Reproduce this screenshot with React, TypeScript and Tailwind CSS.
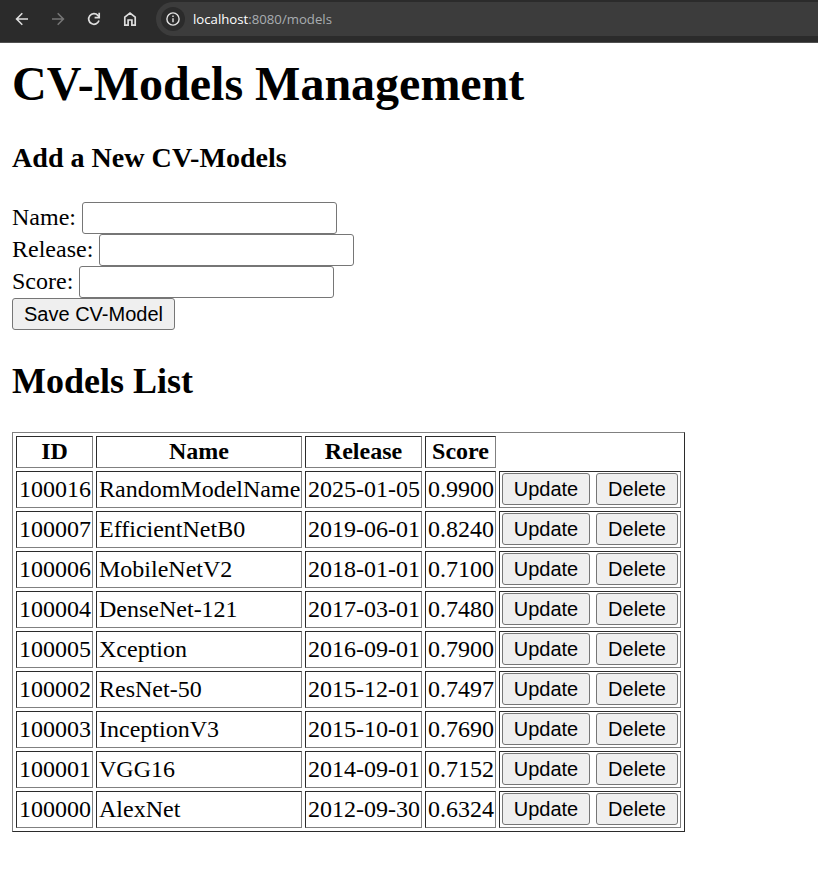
import React from "react";

const models = [
  ["100016", "RandomModelName", "2025-01-05", "0.9900"],
  ["100007", "EfficientNetB0", "2019-06-01", "0.8240"],
  ["100006", "MobileNetV2", "2018-01-01", "0.7100"],
  ["100004", "DenseNet-121", "2017-03-01", "0.7480"],
  ["100005", "Xception", "2016-09-01", "0.7900"],
  ["100002", "ResNet-50", "2015-12-01", "0.7497"],
  ["100003", "InceptionV3", "2015-10-01", "0.7690"],
  ["100001", "VGG16", "2014-09-01", "0.7152"],
  ["100000", "AlexNet", "2012-09-30", "0.6324"],
];

const cell =
  "border border-t-[#2b2b2b] border-l-[#2b2b2b] border-r-[#808080] border-b-[#808080] px-[2px] py-0 align-top";

const button =
  "box-border h-8 rounded-[3px] border border-[#767676] bg-[#efefef] p-0 text-center font-['Liberation_Sans',Arial,sans-serif] text-[20px] leading-[28px] text-black";

function Toolbar() {
  return (
    <header className="flex h-[43px] items-start overflow-hidden border-b border-[#505050] bg-[#2b2b2b]">
      <div className="flex h-[38px] w-[156px] shrink-0 items-center pl-[14px]">
        <svg width="16" height="16" viewBox="0 0 16 16" fill="none" stroke="#dedede" strokeWidth="1.6">
          <path d="M14 8H3M8.3 2.3 2.6 8l5.7 5.7" />
        </svg>
        <svg className="ml-5" width="16" height="16" viewBox="0 0 16 16" fill="none" stroke="#757575" strokeWidth="1.6">
          <path d="M2 8h11M7.7 2.3 13.4 8l-5.7 5.7" />
        </svg>
        <svg className="ml-5" width="16" height="16" viewBox="0 0 16 16" fill="none" stroke="#dedede" strokeWidth="1.7">
          <path d="M13 9.6A5.3 5.3 0 1 1 11.9 4.4L13.2 6" />
          <path d="M13.2 1.8v4.8H8.6" />
        </svg>
        <svg className="ml-5" width="16" height="16" viewBox="0 0 16 16" fill="none" stroke="#dedede" strokeWidth="1.7">
          <path d="M2.8 14.1V6.1L8 2l5.2 4.1v8H9.9V9H6.1v5.1z" />
        </svg>
      </div>
      <div className="mt-[2px] flex h-[34px] flex-1 items-center rounded-l-full bg-[#3c3c3c] pl-[5px]">
        <span className="flex size-6 items-center justify-center rounded-full bg-[#2b2b2b]">
          <svg width="14" height="14" viewBox="0 0 14 14" fill="none" stroke="#e3e3e3" strokeWidth="1.4">
            <circle cx="7" cy="7" r="6.1" />
            <path d="M7 6.2v4M7 3.6v1.5" />
          </svg>
        </span>
        <span className="ml-2 font-['Open_Sans','Noto_Sans',sans-serif] text-[13.2px] leading-5 whitespace-nowrap text-[#a9adb1]">
          <span className="text-white">localhost</span>:8080/models
        </span>
      </div>
    </header>
  );
}

function Field({ label }: { label: string }) {
  return (
    <label className="flex h-8 items-start gap-[6px]">
      <span className="leading-[30px]">{label}</span>
      <input className="h-8 w-[255px] rounded-[3px] border border-[#767676] bg-white px-[3px] outline-none" />
    </label>
  );
}

export default function App() {
  return (
    <div className="h-[894px] overflow-hidden bg-white font-['Liberation_Serif','Times_New_Roman',serif] text-[24px] text-black">
      <Toolbar />
      <main className="pt-[13px] pl-3">
        <h1 className="text-[48px] leading-[55px] font-bold">CV-Models Management</h1>
        <h3 className="mt-[31px] text-[28.08px] leading-[32px] font-bold">Add a New CV-Models</h3>
        <form className="mt-[28px]">
          <Field label="Name:" />
          <Field label="Release:" />
          <Field label="Score:" />
          <button type="button" className={`${button} block w-[163px]`}>Save CV-Model</button>
        </form>
        <h2 className="mt-[31px] text-[36px] leading-[41px] font-bold">Models List</h2>
        <table className="mt-[30px] w-[673px] table-fixed border-separate border-spacing-[3px] border border-t-[#808080] border-r-[#2b2b2b] border-b-[#2b2b2b] border-l-[#808080]">
          <colgroup>
            <col className="w-[77px]" />
            <col className="w-[206px]" />
            <col className="w-[117px]" />
            <col className="w-[71px]" />
            <col className="w-[182px]" />
          </colgroup>
          <thead>
            <tr className="h-8">
              {["ID", "Name", "Release", "Score"].map((h) => (
                <th key={h} className={`${cell} text-center leading-[28px] font-bold`}>{h}</th>
              ))}
            </tr>
          </thead>
          <tbody>
            {models.map((row) => (
              <tr key={row[0]} className="h-[37px]">
                {row.map((value) => (
                  <td key={value} className={`${cell} leading-[34px] whitespace-nowrap`}>{value}</td>
                ))}
                <td className={cell}>
                  <div className="mt-px flex gap-[6px]">
                    <button type="button" className={`${button} w-[88px]`}>Update</button>
                    <button type="button" className={`${button} w-[82px]`}>Delete</button>
                  </div>
                </td>
              </tr>
            ))}
          </tbody>
        </table>
      </main>
    </div>
  );
}
